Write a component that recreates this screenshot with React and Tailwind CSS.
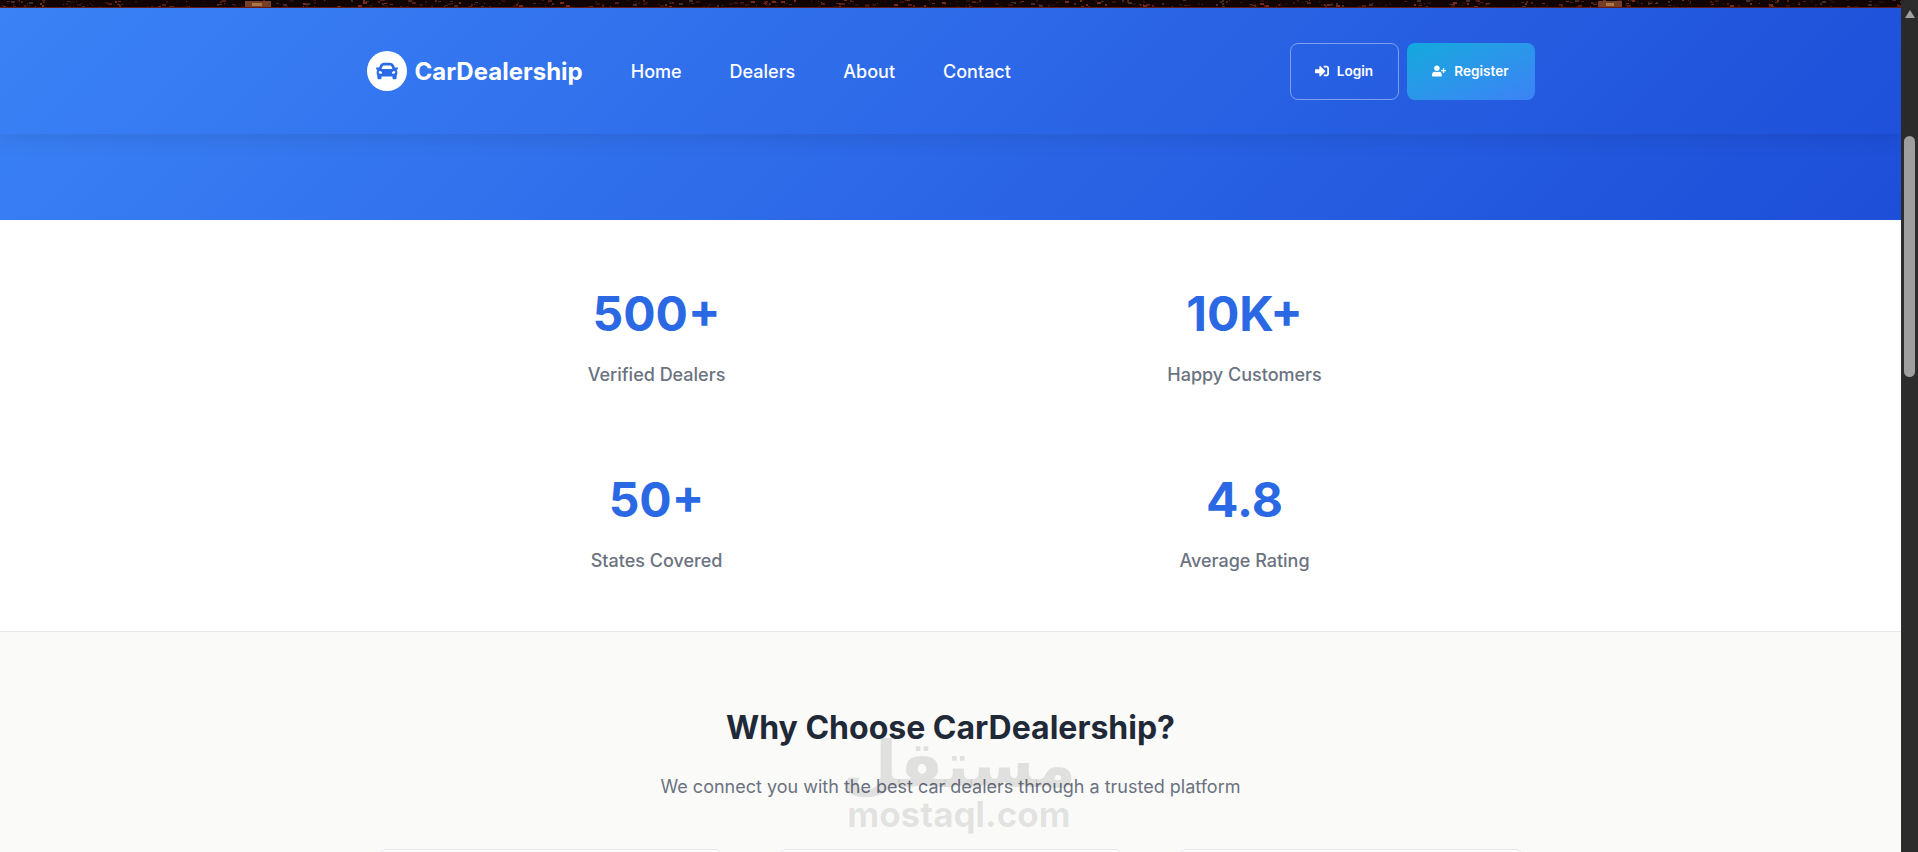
import { FaCar, FaSignInAlt, FaUserPlus } from 'react-icons/fa'

const navLinks = ['Home', 'Dealers', 'About', 'Contact']

const stats = [
  { value: '500+', label: 'Verified Dealers' },
  { value: '10K+', label: 'Happy Customers' },
  { value: '50+', label: 'States Covered' },
  { value: '4.8', label: 'Average Rating' },
]

// the photo that peeks out above the header, just noise really
function speckles() {
  const out = []
  let seed = 7
  for (let i = 0; i < 520; i++) {
    seed = (seed * 16807) % 2147483647
    const x = seed % 1901
    seed = (seed * 16807) % 2147483647
    const y = seed % 7
    seed = (seed * 16807) % 2147483647
    const c = ['#3a120c', '#5a1d12', '#24100c', '#7a2c18', '#44302a'][seed % 5]
    out.push(<rect key={i} x={x} y={y} width={1 + (seed % 4)} height={1 + (seed % 2)} fill={c} />)
  }
  return out
}

function TopStrip() {
  return (
    <div className="h-2 bg-[#120404] border-b border-[#6b1a12] overflow-hidden">
      <svg viewBox="0 0 1901 7" className="w-full h-[7px] block">
        {speckles()}
        <rect x="245" y="1" width="26" height="6" fill="#7a4028" />
        <rect x="252" y="3" width="10" height="3" fill="#b07a48" />
        <rect x="1598" y="1" width="24" height="6" fill="#7a4028" />
        <rect x="1606" y="3" width="8" height="3" fill="#b07a48" />
      </svg>
    </div>
  )
}

function Header() {
  return (
    <header className="h-[126px] shadow-[0_4px_20px_rgba(0,0,0,0.1)] relative">
      <div className="max-w-[1200px] h-full mx-auto px-4 flex items-center justify-between">
        <div className="flex items-center">
          <div className="flex items-center gap-2 mr-12">
            <div className="w-10 h-10 rounded-full bg-white flex items-center justify-center">
              <FaCar className="w-[22px] h-[22px] text-[#2b6ae6]" />
            </div>
            <span className="pt-px text-2xl font-bold text-white">CarDealership</span>
          </div>
          <nav className="pt-px flex items-center gap-12">
            {navLinks.map((l) => (
              <a key={l} className="text-lg font-medium text-white">{l}</a>
            ))}
          </nav>
        </div>
        <div className="flex items-center gap-2">
          <button className="w-[109px] h-[57px] rounded-lg border border-white/40 flex items-center justify-center gap-2 text-[13.6px] font-semibold text-white">
            <FaSignInAlt className="w-3.5 h-3.5" />
            Login
          </button>
          <button className="w-[128px] h-[57px] rounded-lg bg-gradient-to-br from-[#0ea9dc] to-[#3b82f6] flex items-center justify-center gap-2 text-[13.6px] font-semibold text-white">
            <FaUserPlus className="w-3.5 h-3.5" />
            Register
          </button>
        </div>
      </div>
    </header>
  )
}

function Stats() {
  return (
    <section className="bg-white border-b border-[#e5e7eb] h-[412px] pt-[49px]">
      <div className="max-w-[1144px] mx-auto grid grid-cols-2 gap-x-8 gap-y-12">
        {stats.map((s) => (
          <div key={s.label} className="h-[138px] pt-4 flex flex-col items-center">
            <div className="text-5xl leading-[58px] font-bold text-[#2a69e3]">{s.value}</div>
            <div className="mt-[18px] text-lg leading-[27px] font-medium text-[#6b7280]">{s.label}</div>
          </div>
        ))}
      </div>
    </section>
  )
}

function Features() {
  return (
    <section className="relative bg-[#fafaf9] h-[300px] pt-[76px]">
      <h2 className="text-center text-[32px] leading-[40px] font-bold text-[#1f2937]">Why Choose CarDealership?</h2>
      <p className="mt-[25px] text-center text-lg leading-[28px] text-[#6b7280]">We connect you with the best car dealers through a trusted platform</p>
      <div className="mt-[48px] max-w-[1142px] mx-auto grid grid-cols-3 gap-[59px]">
        {[1, 2, 3].map((n) => (
          <div key={n} className="h-40 rounded-md bg-white border border-[#e5e7eb]" />
        ))}
      </div>
    </section>
  )
}

export default function App() {
  return (
    <div className="relative h-[852px] overflow-hidden flex font-['Inter',sans-serif]">
      <div className="flex-1 min-w-0">
        <TopStrip />
        <div className="h-[212px] bg-[linear-gradient(135deg,#3b82f6,#1d4ed8)]">
          <Header />
        </div>
        <Stats />
        <Features />
      </div>

      {/* browser scrollbar */}
      <div className="w-[17px] shrink-0 bg-[#2c2c2c] flex flex-col items-center pt-[9px]">
        <svg viewBox="0 0 12 10" className="w-3 h-2.5 fill-[#a3a3a3]"><path d="M6 1 11 9H1z" /></svg>
        <div className="mt-[117px] w-[11px] h-[241px] rounded-full bg-[#9f9f9f]" />
      </div>

      {/* mostaql watermark */}
      <div className="absolute left-[847px] top-[735px] w-[224px] flex flex-col items-center text-black/10 pointer-events-none select-none">
        <span className="text-[64px] leading-[60px] font-bold font-['DejaVu_Sans',sans-serif]" dir="rtl">مستقل</span>
        <span className="text-[35px] leading-[38px] font-bold">mostaql.com</span>
      </div>
    </div>
  )
}
